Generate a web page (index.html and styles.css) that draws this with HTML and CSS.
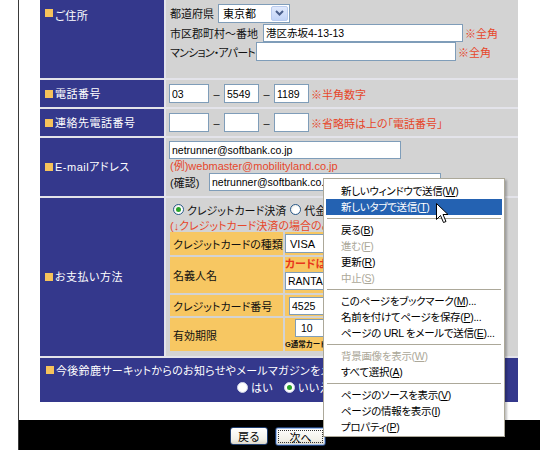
FILE: index.html
```html
<!DOCTYPE html>
<html lang="ja">
<head>
<meta charset="utf-8">
<title>お客様情報入力</title>
<link rel="stylesheet" href="styles.css">
</head>
<body>
<div class="frame">
  <div class="content">
    <div class="form">
      <div class="lbl lbl-top"><span class="sq"></span>ご住所</div>
      <div class="val addr">
        <div class="line l1"><span class="cap w48">都道府県</span><span class="sel sel-pref"><span class="sel-text">東京都</span><span class="sel-btn"><svg width="9" height="6" viewBox="0 0 9 6"><path d="M1 1 L4.5 4.5 L8 1" fill="none" stroke="#4a5f8c" stroke-width="2"/></svg></span></span></div>
        <div class="line l2"><span class="cap w93">市区郡町村～番地</span><input class="in w200" type="text" value="港区赤坂4-13-13"><span class="note">※全角</span></div>
        <div class="line l3"><span class="cap w87">マンション・アパート</span><input class="in w200" type="text" value=""><span class="note">※全角</span></div>
      </div>

      <div class="lbl"><span class="sq"></span>電話番号</div>
      <div class="val tel">
        <input class="in t1" type="text" value="03"><span class="dash">–</span><input class="in t2" type="text" value="5549"><span class="dash">–</span><input class="in t3" type="text" value="1189"><span class="note">※半角数字</span>
      </div>

      <div class="lbl"><span class="sq"></span>連絡先電話番号</div>
      <div class="val tel">
        <input class="in t1" type="text" value=""><span class="dash">–</span><input class="in t2" type="text" value=""><span class="dash">–</span><input class="in t3" type="text" value=""><span class="note">※省略時は上の「電話番号」</span>
      </div>

      <div class="lbl"><span class="sq"></span>E-mailアドレス</div>
      <div class="val mail">
        <input class="in wmail" type="text" value="netrunner@softbank.co.jp">
        <div class="note ex">(例)webmaster@mobilityland.co.jp</div>
        <div class="cline"><span class="cap w40">(確認)</span><input class="in wmail" type="text" value="netrunner@softbank.co.jp"></div>
      </div>

      <div class="lbl"><span class="sq"></span>お支払い方法</div>
      <div class="val pay">
        <div class="pline"><span class="radio on"></span><span>クレジットカード決済</span><span class="radio r2"></span><span>代金引換</span></div>
        <div class="pline note">(↓クレジットカード決済の場合のみご記入ください)</div>
        <div class="card">
          <div class="clbl">クレジットカードの種類</div>
          <div class="cval"><span class="sel sel-card"><span class="sel-text">VISA</span></span></div>
          <div class="clbl">名義人名</div>
          <div class="cval c2"><div class="warn">カードは半角ローマ字で入力</div><input class="in nm" type="text" value="RANTA SUZUKA"></div>
          <div class="clbl">クレジットカード番号</div>
          <div class="cval c3"><input class="in cn" type="text" value="4525"><input class="in cn" type="text" value="0000"></div>
          <div class="clbl">有効期限</div>
          <div class="cval c4"><input class="in mm" type="text" value="10"><div class="tiny">G通常カード表記の月/年</div></div>
        </div>
      </div>

      <div class="news">
        <div class="nline"><span class="sq"></span>今後鈴鹿サーキットからのお知らせやメールマガジンをメールで受け取りますか？</div>
        <div class="nradios"><span class="radio"></span><span>はい</span><span class="radio on r2"></span><span>いいえ</span></div>
      </div>
    </div>
  </div>
  <div class="footer">
    <button class="btn b-back" type="button">戻る</button>
    <button class="btn b-next" type="button"><span class="focus">次へ</span></button>
  </div>
</div>

<div class="menu">
  <div class="mi">新しいウィンドウで送信(<u>W</u>)</div>
  <div class="mi hl">新しいタブで送信(<u>T</u>)</div>
  <div class="msep"></div>
  <div class="mi">戻る(<u>B</u>)</div>
  <div class="mi dis">進む(<u>F</u>)</div>
  <div class="mi">更新(<u>R</u>)</div>
  <div class="mi dis">中止(<u>S</u>)</div>
  <div class="msep"></div>
  <div class="mi">このページをブックマーク(<u>M</u>)...</div>
  <div class="mi">名前を付けてページを保存(<u>P</u>)...</div>
  <div class="mi">ページの URL をメールで送信(<u>E</u>)...</div>
  <div class="msep"></div>
  <div class="mi dis">背景画像を表示(<u>W</u>)</div>
  <div class="mi">すべて選択(<u>A</u>)</div>
  <div class="msep"></div>
  <div class="mi">ページのソースを表示(<u>V</u>)</div>
  <div class="mi">ページの情報を表示(<u>I</u>)</div>
  <div class="mi">プロパティ(<u>P</u>)</div>
</div>

<svg class="cursor" width="13" height="21" viewBox="0 0 13 21">
  <path d="M0.5 0.5 L0.5 16.5 L4.5 12.5 L7.5 19.5 L10 18.5 L7 11.5 L12 11.5 Z" fill="#fff" stroke="#000" stroke-width="1" stroke-linejoin="miter"/>
</svg>
</body>
</html>
```

FILE: styles.css
```css
html, body {
  margin: 0;
  padding: 0;
}
body {
  width: 540px;
  height: 450px;
  overflow: hidden;
  background: #fff;
  position: relative;
  font-family: "Liberation Sans", "Noto Sans CJK JP", sans-serif;
  font-size: 11px;
  color: #111;
  font-feature-settings: "palt";
}
.frame {
  margin-left: 18px;
  border-left: 1px solid #3a3a3a;
  height: 450px;
  display: flex;
  flex-direction: column;
}
.content {
  height: 420px;
  box-sizing: border-box;
  padding: 0 22px 18px 21px;
  background: #fff;
}
.form {
  display: grid;
  grid-template-columns: 124px 352px;
  grid-template-rows: 78px 27px 27px 58px 158px 44px;
  gap: 2px;
  background: #e3e3ea;
  width: 478px;
}
.lbl {
  background: #34388c;
  color: #fff;
  display: flex;
  align-items: center;
  padding-left: 5px;
  letter-spacing: 0.5px;
  line-height: 14px;
}
.lbl-top {
  align-items: flex-start;
  padding-top: 9px;
}
.sq {
  display: inline-block;
  width: 8px;
  height: 8px;
  background: #f6c35b;
  margin-right: 2px;
  flex: none;
}
.val {
  background: #d3d3d3;
  padding-left: 3px;
}
.cap {
  display: inline-block;
  padding-left: 1px;
  white-space: nowrap;
  box-sizing: border-box;
  flex: none;
}
.w48 { width: 49px; }
.w93 { width: 94px; }
.w87 { width: 87px; letter-spacing: -0.8px; }
.w40 { width: 40px; }

.in {
  box-sizing: border-box;
  border: 1px solid #7f9db9;
  background: #fff;
  font-family: "Liberation Sans", "Noto Sans CJK JP", sans-serif;
  font-size: 10.5px;
  color: #000;
  padding: 0 2px;
  margin: 0;
  height: 18px;
  outline: none;
}
.note {
  color: #e6472b;
  white-space: nowrap;
}

/* address */
.addr {
  padding-top: 3px;
}
.line {
  display: flex;
  align-items: center;
  height: 19px;
}
.l1 { height: 20px; }
.l2 .in { height: 18px; }
.l3 .in { height: 19px; }
.w200 { width: 200px; }
.line .note { margin-left: 2px; }

.sel {
  box-sizing: border-box;
  display: inline-flex;
  align-items: center;
  justify-content: space-between;
  border: 1px solid #7f9db9;
  background: #fff;
  height: 19px;
  padding: 1px;
}
.sel-pref { width: 72px; }
.sel-text {
  padding-left: 3px;
  color: #000;
}
.sel-btn {
  box-sizing: border-box;
  width: 17px;
  height: 15px;
  border: 1px solid #b9cbee;
  border-radius: 2px;
  background: linear-gradient(#e0e9fc, #c2d4f7);
  display: flex;
  align-items: center;
  justify-content: center;
}

/* tel */
.tel {
  display: flex;
  align-items: center;
}
.tel .in { height: 19px; }
.t1 { width: 40px; }
.t2 { width: 35px; }
.t3 { width: 35px; }
.dash {
  width: 15px;
  text-align: center;
}
.tel .note { margin-left: 2px; }

/* mail */
.mail {
  padding-top: 3px;
}
.wmail { width: 232px; }
.ex {
  height: 14px;
  line-height: 14px;
  padding-left: 1px;
}
.cline {
  display: flex;
  align-items: center;
}

/* pay */
.pay {
  padding-top: 4px;
  padding-left: 4px;
}
.pline {
  display: flex;
  align-items: center;
  height: 15px;
  white-space: nowrap;
}
.pline .radio { margin-left: 3px; margin-right: 3px; }
.pline .r2 { margin-left: 4px; }
.radio {
  display: inline-block;
  box-sizing: border-box;
  width: 11px;
  height: 11px;
  border-radius: 50%;
  border: 1px solid #2a5a8a;
  background: radial-gradient(circle at 60% 60%, #fff 40%, #e2e0d8);
  position: relative;
  flex: none;
}
.radio.on::after {
  content: "";
  position: absolute;
  left: 2px;
  top: 2px;
  width: 5px;
  height: 5px;
  border-radius: 50%;
  background: #2aa52a;
}
.card {
  display: grid;
  grid-template-columns: 113px 200px;
  grid-template-rows: 23px 36px 21px 33px;
  gap: 2px;
}
.clbl {
  background: #f7c762;
  display: flex;
  align-items: center;
  padding-left: 3px;
  white-space: nowrap;
}
.cval {
  background: #f7c762;
  display: flex;
  align-items: center;
}
.sel-card { width: 80px; }
.c2 {
  flex-direction: column;
  align-items: flex-start;
  padding-top: 1px;
}
.warn {
  color: #e8371c;
  font-weight: bold;
  height: 14px;
  line-height: 13px;
}
.nm { width: 140px; height: 18px; }
.c3 { padding-left: 4px; gap: 4px; }
.cn { width: 42px; }
.c4 {
  flex-direction: column;
  align-items: flex-start;
  padding-top: 1px;
}
.mm { width: 30px; margin-left: 10px; padding-left: 5px; }
.tiny {
  font-size: 7.5px;
  font-weight: bold;
  line-height: 10px;
  margin-top: 3px;
  white-space: nowrap;
}

/* newsletter */
.news {
  grid-column: 1 / 3;
  background: #34388c;
  color: #fff;
  padding: 5px 0 0 6px;
  letter-spacing: 0.3px;
}
.nline {
  display: flex;
  align-items: center;
  height: 14px;
  white-space: nowrap;
}
.nradios {
  display: flex;
  align-items: center;
  height: 14px;
  margin-top: 3px;
  padding-left: 191px;
}
.nradios .radio {
  margin-right: 3px;
  border-color: #d0d4e8;
  background: #fff;
}
.nradios .r2 { margin-left: 11px; }

/* footer */
.footer {
  flex: 1;
  background: #000;
  display: flex;
  justify-content: center;
  align-items: flex-start;
  gap: 7px;
  padding-top: 7px;
  padding-right: 3px;
}
.btn {
  box-sizing: border-box;
  font-family: "Liberation Sans", "Noto Sans CJK JP", sans-serif;
  font-size: 11px;
  color: #000;
  border: 1px solid #1f3d6e;
  border-radius: 3px;
  background: linear-gradient(#ffffff, #f2f1ea 70%, #dcd8cc);
  padding: 0;
  margin: 0;
}
.b-back { width: 38px; height: 18px; }
.b-next {
  width: 51px;
  height: 19px;
  box-shadow: inset 0 0 0 1px #9ebbea;
  padding: 2px;
}
.focus {
  display: flex;
  align-items: center;
  justify-content: center;
  height: 100%;
  border: 1px dotted #333;
  box-sizing: border-box;
}

/* context menu */
.menu {
  position: absolute;
  left: 323px;
  top: 178px;
  width: 182px;
  height: 259px;
  box-sizing: border-box;
  background: #fff;
  border: 1px solid #aca899;
  padding: 4px 2px 1px 2px;
  box-shadow: 2px 2px 2px rgba(0, 0, 0, 0.25);
  font-size: 10.5px;
  letter-spacing: -0.3px;
}
.mi {
  height: 16px;
  line-height: 16px;
  padding-left: 15px;
  white-space: nowrap;
  color: #000;
}
.mi u { text-underline-offset: 1px; }
.mi.hl {
  background: #2462b2;
  color: #fff;
}
.mi.dis {
  color: #aca899;
}
.msep {
  height: 0;
  border-top: 1px solid #aca899;
  margin: 3px 1px 3px 1px;
}

.cursor {
  position: absolute;
  left: 436px;
  top: 203px;
}
```
